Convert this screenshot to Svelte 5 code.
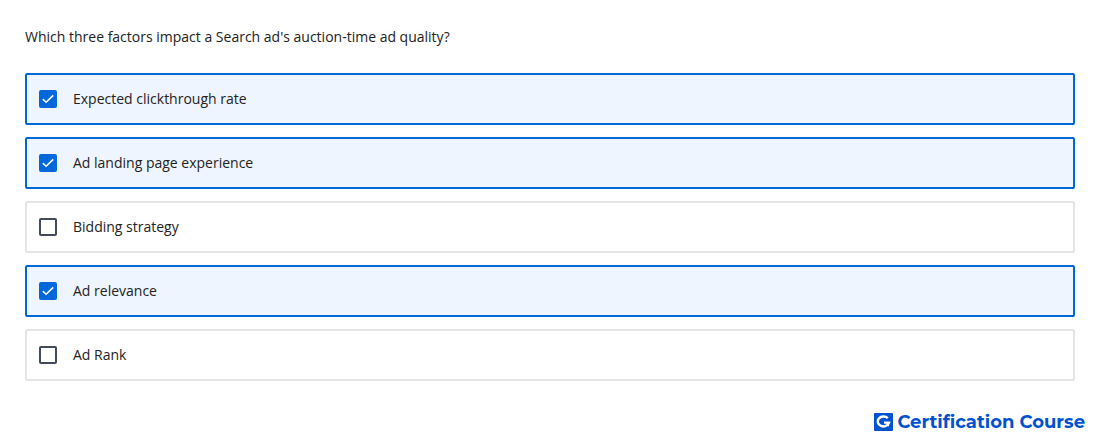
<script>
  const question = "Which three factors impact a Search ad's auction-time ad quality?";

  let answers = $state([
    { label: "Expected clickthrough rate", checked: true },
    { label: "Ad landing page experience", checked: true },
    { label: "Bidding strategy", checked: false },
    { label: "Ad relevance", checked: true },
    { label: "Ad Rank", checked: false }
  ]);
</script>

<svelte:head>
  <title>Certification Course</title>
</svelte:head>

<main>
  <fieldset>
    <legend>{question}</legend>

    <div class="answers">
      {#each answers as answer}
        <label class="answer" class:selected={answer.checked}>
          <span class="box">
            <input type="checkbox" bind:checked={answer.checked} />
            {#if answer.checked}
              <svg viewBox="0 0 18 18" aria-hidden="true">
                <path d="M3.8 9.1 7.1 12.3 14.2 5.4" />
              </svg>
            {/if}
          </span>
          <span>{answer.label}</span>
        </label>
      {/each}
    </div>
  </fieldset>

  <footer>
    <svg class="logo" viewBox="0 0 19 18" aria-hidden="true">
      <rect width="19" height="18" rx="1" />
      <path d="M13.8 5.2A5.7 5 0 1 0 15 9.6H10M13.8 9.6V13.2" />
    </svg>
    <span>Certification Course</span>
  </footer>
</main>

<style>
  :global(body) {
    margin: 0;
    background: #fff;
    color: #222;
    font-family: "Open Sans", "Noto Sans", sans-serif;
    font-size: 14px;
    line-height: 20px;
  }

  main {
    padding: 27px 25px 0;
  }

  fieldset {
    min-width: 0;
    margin: 0;
    padding: 0;
    border: 0;
  }

  legend {
    padding: 0;
    margin-bottom: 26px;
  }

  .answers {
    display: grid;
    gap: 12px;
  }

  .answer {
    display: flex;
    align-items: center;
    gap: 16px;
    padding: 14px 12px;
    border: 2px solid #e5e5e5;
    border-radius: 2px;
    cursor: pointer;
  }

  .answer.selected {
    border-color: #0068d6;
    background: #eff5ff;
  }

  .box {
    display: grid;
    width: 18px;
    height: 18px;
  }

  .box > * {
    grid-area: 1 / 1;
  }

  input {
    appearance: none;
    box-sizing: border-box;
    width: 18px;
    height: 18px;
    margin: 0;
    border: 2px solid #414b5a;
    border-radius: 2px;
    background: #fff;
  }

  input:checked {
    border-color: #0068db;
    background: #0068db;
  }

  .box svg {
    pointer-events: none;
    fill: none;
    stroke: #fff;
    stroke-width: 1.5;
  }

  footer {
    display: flex;
    justify-content: flex-end;
    align-items: center;
    gap: 4px;
    margin: 31px -10px 0 0;
    color: #0052d0;
    font-family: Montserrat, "DejaVu Sans", sans-serif;
    font-size: 18px;
    font-weight: 700;
  }

  .logo {
    width: 19px;
    height: 18px;
    fill: #0052d0;
  }

  .logo path {
    fill: none;
    stroke: #fff;
    stroke-width: 2.4;
  }
</style>
